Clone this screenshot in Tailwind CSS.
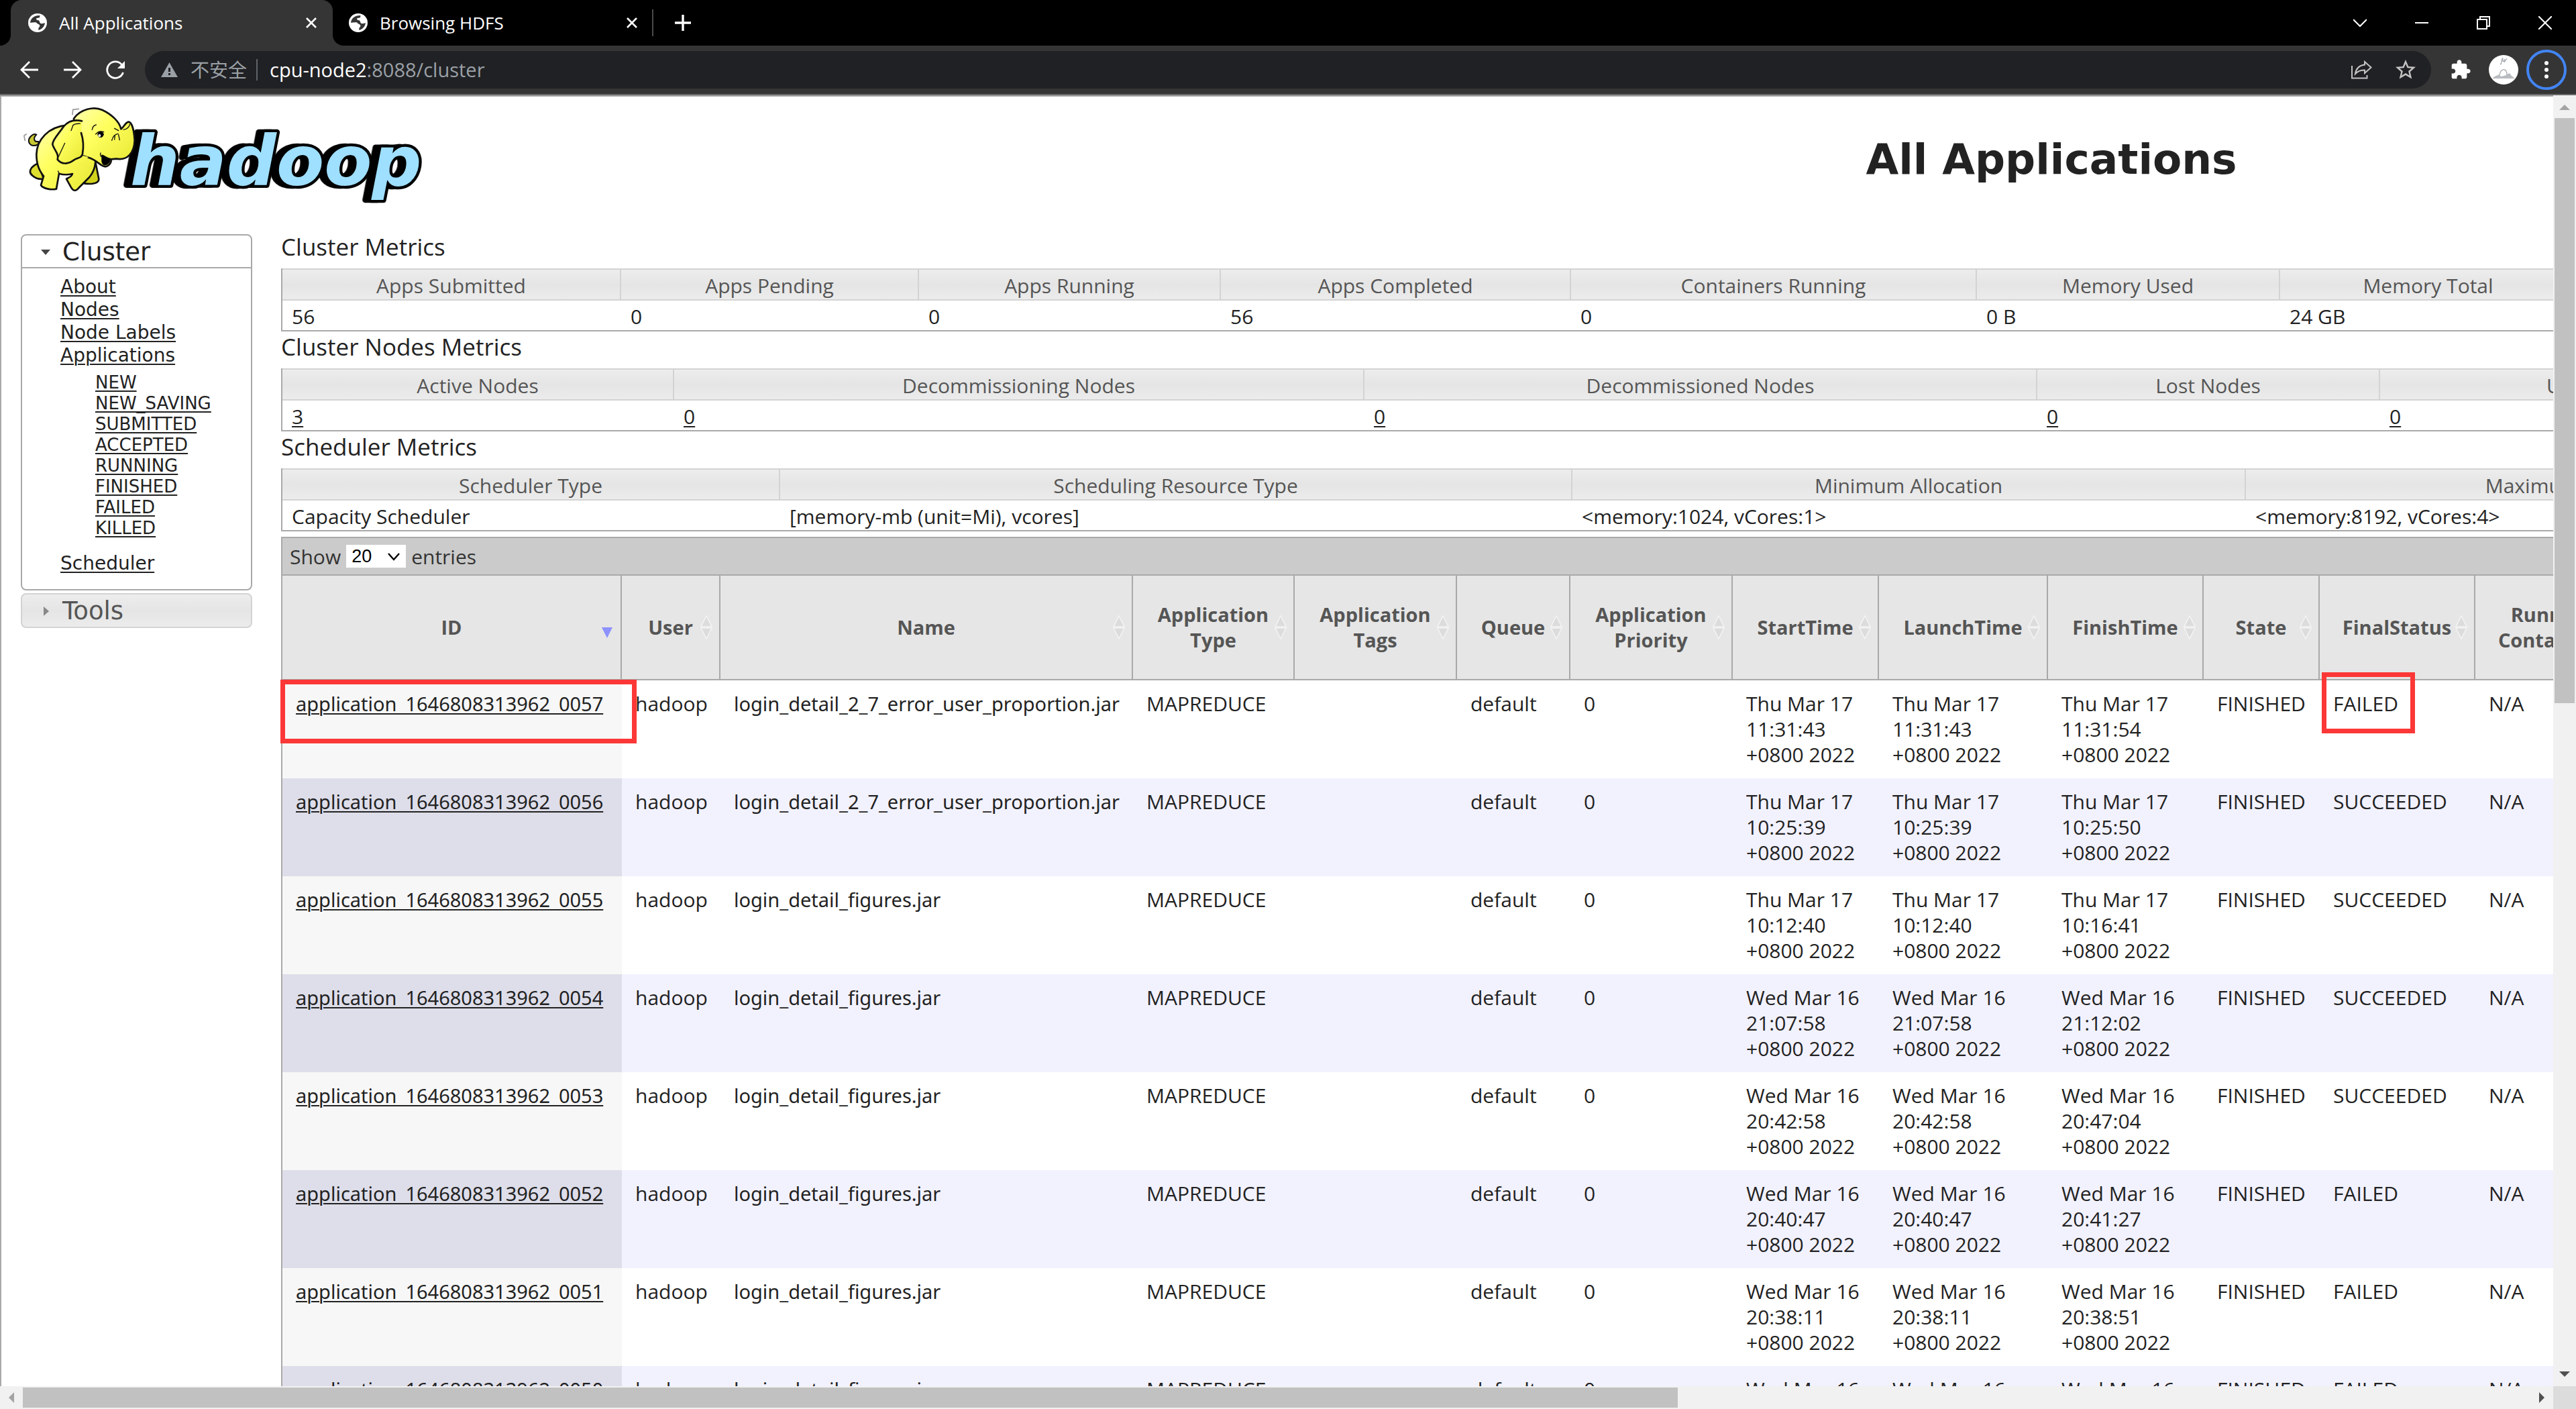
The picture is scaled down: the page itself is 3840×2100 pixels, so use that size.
<!DOCTYPE html>
<html lang="en">
<head>
<meta charset="utf-8">
<title>All Applications</title>
<script src="https://cdn.jsdelivr.net/npm/@tailwindcss/browser@4"></script>
</head>
<body class="flex h-screen flex-col overflow-hidden bg-white font-['Open_Sans','Noto_Sans_CJK_SC',sans-serif] text-[30px] text-[#222]">

<svg class="hidden" aria-hidden="true">
  <symbol id="globe" viewBox="0 0 84 84">
    <circle cx="42" cy="42" r="42" fill="#fff"/>
    <path fill="#353535" d="M52 9V14C52 20 46 20 38 21C34 26 38 30 46 31C52 33 50 42 56 45C64 47 70 43 75 43C73 58 62 71 46 75V65C54 59 54 51 46 48C38 46 39 42 34 40C24 40 16 42 9 41C11 22 28 8 52 9Z"/>
  </symbol>
  <symbol id="cross" viewBox="0 0 16 16"><path d="M1 1L15 15M15 1L1 15" fill="none" stroke="#fff" stroke-width="2.6"/></symbol>
  <symbol id="sort" viewBox="0 0 18 36"><path d="M9 1L17 17H1Z M9 35L17 19H1Z" fill="#dcdcdc" stroke="#f4f4f4" stroke-width="1.5"/></symbol>
</svg>

<!-- Tab strip -->
<div class="flex h-[68px] shrink-0 items-center bg-black text-[26px] text-white">
  <div class="h-full w-4 bg-[#353535]"><div class="h-full rounded-br-2xl bg-black"></div></div>
  <div class="flex h-full w-[480px] items-center rounded-t-2xl bg-[#353535] pr-6 pl-[26px]">
    <svg class="mr-[18px] size-7"><use href="#globe"/></svg>
    <span class="flex-1 whitespace-nowrap">All Applications</span>
    <button aria-label="Close tab" class="flex"><svg class="size-4"><use href="#cross"/></svg></button>
  </div>
  <div class="h-full w-4 bg-[#353535]"><div class="h-full rounded-bl-2xl bg-black"></div></div>
  <div class="flex h-full w-[438px] items-center pl-2">
    <svg class="mr-[18px] size-7"><use href="#globe"/></svg>
    <span class="flex-1 whitespace-nowrap">Browsing HDFS</span>
    <button aria-label="Close tab" class="flex"><svg class="size-4"><use href="#cross"/></svg></button>
  </div>
  <div class="ml-[22px] h-10 w-[2px] bg-[#4a4a4a]"></div>
  <button aria-label="New tab" class="ml-8 flex"><svg class="size-6" viewBox="0 0 24 24"><path d="M12 0V24M0 12H24" stroke="#fff" stroke-width="3.4"/></svg></button>
  <div class="ml-auto flex h-[58px] items-center gap-[72px] pr-9">
    <button aria-label="Search tabs" class="flex"><svg class="size-5" viewBox="0 0 20 20"><path d="M0 5L10 15L20 5" fill="none" stroke="#fff" stroke-width="2"/></svg></button>
    <button aria-label="Minimize" class="flex"><svg class="size-5" viewBox="0 0 20 20"><path d="M0 10H20" stroke="#fff" stroke-width="2"/></svg></button>
    <button aria-label="Restore" class="flex"><svg class="size-5" viewBox="0 0 20 20"><path d="M1 5H15V19H1ZM5 5V1H19V15H15" fill="none" stroke="#fff" stroke-width="2"/></svg></button>
    <button aria-label="Close" class="flex"><svg class="size-5" viewBox="0 0 20 20"><path d="M0 0L20 20M20 0L0 20" stroke="#fff" stroke-width="2"/></svg></button>
  </div>
</div>

<!-- Toolbar -->
<div class="flex h-[74px] shrink-0 items-center border-b-2 border-[#696969] bg-[#353535] pr-[14px] pl-[30px]">
  <button aria-label="Back" class="mr-9 flex"><svg class="size-7" viewBox="0 0 28 28"><path d="M27 14H3M14 2L2 14L14 26" fill="none" stroke="#fff" stroke-width="2.8"/></svg></button>
  <button aria-label="Forward" class="mr-9 flex"><svg class="size-7" viewBox="0 0 28 28"><path d="M1 14H25M14 2L26 14L14 26" fill="none" stroke="#fff" stroke-width="2.8"/></svg></button>
  <button aria-label="Reload" class="mr-[30px] flex"><svg class="size-7" viewBox="0 0 28 28"><path d="M25.500 18A12.200 12.200 0 1 1 23.500 6.500" fill="none" stroke="#fff" stroke-width="2.8"/><path d="M28 1V12H17Z" fill="#fff"/></svg></button>
  <div class="flex h-14 flex-1 items-center rounded-full bg-[#202124] pr-5 pl-6">
    <svg class="mr-[19px] h-[22px] w-[25px]" viewBox="0 0 25 22"><path d="M12.500 0L25 22H0Z" fill="#9aa0a6"/><path d="M11 8H14V14H11ZM11 16H14V19H11Z" fill="#202124"/></svg>
    <span class="text-[28px] text-[#9aa0a6]">不安全</span>
    <span class="mr-[18px] ml-[14px] h-8 w-[2px] bg-[#5f6368]"></span>
    <span class="flex-1 text-[29px] whitespace-nowrap text-[#9aa0a6]"><span class="text-white">cpu-node2</span>:8088/cluster</span>
    <button aria-label="Share" class="mr-8 flex"><svg class="h-7 w-8" viewBox="0 0 32 28"><path d="M2 8V26.500H24.500V22" fill="none" stroke="#c4c4c4" stroke-width="2"/><path d="M21 2L30.500 10.500L21 19V14.500C14 14.500 10 16.500 7 20C8 12 13 7.500 21 6.500Z" fill="none" stroke="#c4c4c4" stroke-width="2"/></svg></button>
    <button aria-label="Bookmark" class="flex"><svg class="size-9" viewBox="0 0 24 24"><path fill="#c4c4c4" d="M22 9.240l-7.190-.62L12 2 9.190 8.630 2 9.240l5.460 4.730L5.820 21 12 17.270 18.180 21l-1.630-7.030L22 9.240zM12 15.400l-3.760 2.270 1-4.280-3.320-2.880 4.380-.38L12 6.100l1.710 4.040 4.380.38-3.320 2.880 1 4.280L12 15.400z"/></svg></button>
  </div>
  <button aria-label="Extensions" class="ml-7 flex"><svg class="size-8" viewBox="0 0 24 24"><path fill="#fff" d="M20.500 11H19V7c0-1.100-.9-2-2-2h-4V3.500C13 2.120 11.880 1 10.500 1S8 2.120 8 3.500V5H4c-1.100 0-1.990.9-1.990 2v3.800H3.500c1.490 0 2.700 1.210 2.700 2.700s-1.210 2.700-2.700 2.700H2V20c0 1.100.9 2 2 2h3.800v-1.500c0-1.490 1.210-2.700 2.700-2.700 1.490 0 2.700 1.210 2.700 2.700V22H17c1.100 0 2-.9 2-2v-4h1.500c1.380 0 2.500-1.120 2.500-2.500S21.880 11 20.500 11z"/></svg></button>
  <button aria-label="Profile" class="mr-3 ml-[26px] flex"><svg class="size-11" viewBox="0 0 44 44"><circle cx="22" cy="22" r="22" fill="#fff"/><path d="M5 35C9 31 12 31 15 29L18 32L23 31L31 27L34 31L39 35Z" fill="#b9bcc0"/><path d="M16 30C18 19 27 19 27 29M17 13C19 17 19 4 21 5C20 12 23 10 24 6M23 11L27 5" fill="none" stroke="#9ea4aa" stroke-width="1.200"/></svg></button>
  <button aria-label="Menu" class="flex size-[60px] flex-col items-center justify-center gap-1 rounded-full border-4 border-[#4285f4]">
    <i class="size-[6px] rounded-full bg-white"></i><i class="size-[6px] rounded-full bg-white"></i><i class="size-[6px] rounded-full bg-white"></i>
  </button>
</div>

<!-- Viewport -->
<div class="flex min-h-0 flex-1">
  <div class="min-w-0 flex-1 overflow-hidden border-t-2 border-l-2 border-[#a9a9a9]">
    <div class="min-w-[5766px]">
      <header class="flex h-[201px] items-start">
        <a href="#" aria-label="hadoop" class="w-[346px] shrink-0 pt-[14px] pl-8">
          <svg class="h-[146px] w-[600px]" viewBox="102 474 1800 438">
            <defs>
              <linearGradient id="hide" x1="0" y1="0" x2="1" y2="1"><stop offset="0" stop-color="#ffffb0"/><stop offset=".4" stop-color="#ffff60"/><stop offset="1" stop-color="#e6e632"/></linearGradient>
            </defs>
            <g class="drop-shadow-[-26px_0_0_#000]">
              <text class="[paint-order:stroke]" x="582" y="828" font-family="DejaVu Sans" font-weight="bold" font-style="italic" font-size="311" fill="#9fdfff" stroke="#000" stroke-width="26" stroke-linejoin="round">hadoop</text>
            </g>
            <g stroke="#111" stroke-width="8" stroke-linejoin="round" stroke-linecap="round" fill="url(#hide)">
              <path d="M172 645C140 662 124 640 130 620C138 606 152 596 163 602C148 616 150 636 172 633Z" fill="#c8c830" stroke-width="6"/>
              <path d="M172 730C135 745 125 770 145 785C160 798 180 802 195 800Z" fill="#dede30"/>
              <path d="M428 730L442 800C442 824 400 824 376 820L396 770Z" fill="#d2d21e"/>
              <path d="M300 560C215 567 165 625 163 690C163 740 178 765 195 788L183 828C192 843 228 850 252 845L264 776C280 781 300 783 324 777C320 792 306 794 297 800L318 838C328 855 340 856 352 840L400 792C420 768 427 745 427 715L400 600Z"/>
              <path d="M330 530C360 488 420 474 458 492C500 512 535 545 541 577C556 568 560 545 577 545C592 550 600 590 602 628C600 685 570 718 520 710L497 712C499 735 477 750 462 743C442 734 430 716 400 706L350 690Z"/>
              <path d="M345 690L396 702L372 722L330 714Z" fill="#f6f64c" stroke="none"/>
              <path d="M455 694C462 690 472 706 494 709C492 728 480 737 466 738C450 728 458 712 455 694Z" fill="#000" stroke-width="4"/>
              <path d="M366 541C335 534 305 542 285 565C262 600 236 622 235 645C240 668 266 688 257 713C275 737 305 735 330 716C348 704 364 708 369 688C376 650 372 622 363 594"/>
              <path d="M326 560C336 552 345 552 358 553M326 562L318 584M290 640L262 700M412 580C414 566 420 560 430 558M428 600C436 590 448 584 464 590M450 684C448 690 448 698 455 702M500 628C504 612 512 600 528 598M514 604L512 624M530 602L535 626M512 574L530 584M552 580C566 580 578 568 580 556M264 776L260 765" fill="none" stroke-width="4"/>
              <ellipse cx="450" cy="601" rx="13" ry="13" fill="#000" stroke-width="2"/>
              <circle cx="445" cy="606" r="6" fill="#fff" stroke="none"/>
              <path d="M326 490L352 487M326 492L324 512M108 606L118 600M108 610L112 628" fill="none" stroke="#999" stroke-width="5"/>
            </g>
          </svg>
        </a>
        <h1 class="flex-1 pt-14 text-center font-['DejaVu_Sans',sans-serif] text-[63px] leading-[75px] font-bold">All Applications</h1>
      </header>

      <div class="flex items-start">
        <!-- Side navigation -->
        <nav class="mt-1 mr-[43px] ml-[29px] w-[345px] shrink-0 font-['DejaVu_Sans',sans-serif]">
          <div class="rounded-lg border-2 border-[#a9a9a9] pb-[21px]">
            <h3 class="flex h-[49px] items-center border-b-2 border-[#a9a9a9] pt-[2px] pl-7 text-[37px]">
              <svg class="mr-[18px] h-2 w-[14px]" viewBox="0 0 14 8"><path d="M0 0H14L7 8Z" fill="#454545"/></svg>Cluster
            </h3>
            <ul class="pt-[11px] pl-[57px] text-[28px] leading-[34px] [&_a]:underline [&_a]:decoration-2 [&_a]:underline-offset-[3px]">
              <li><a href="#">About</a></li>
              <li><a href="#">Nodes</a></li>
              <li><a href="#">Node Labels</a></li>
              <li><a href="#">Applications</a>
                <ul class="mt-2 mb-5 pl-[52px] text-[26px] leading-[31px]">
                  <li><a href="#">NEW</a></li>
                  <li><a href="#">NEW_SAVING</a></li>
                  <li><a href="#">SUBMITTED</a></li>
                  <li><a href="#">ACCEPTED</a></li>
                  <li><a href="#">RUNNING</a></li>
                  <li><a href="#">FINISHED</a></li>
                  <li><a href="#">FAILED</a></li>
                  <li><a href="#">KILLED</a></li>
                </ul>
              </li>
              <li><a href="#">Scheduler</a></li>
            </ul>
          </div>
          <h3 class="mt-1 flex h-[52px] items-center rounded-lg border-2 border-[#d3d3d3] bg-linear-to-b from-[#ededed] via-[#e5e5e5] to-[#ececec] pt-[2px] pl-8 text-[37px] text-[#555]">
            <svg class="mr-5 h-[14px] w-2" viewBox="0 0 8 14"><path d="M0 0V14L8 7Z" fill="#888"/></svg>Tools
          </h3>
        </nav>

        <main class="min-w-0 flex-1">
          <div id="metrics"></div>

          <!-- Applications table -->
          <section class="mt-2 border-t-2 border-l-2 border-[#a9a9a9]">
            <div class="flex h-14 items-center gap-2 border-b-2 border-[#a9a9a9] bg-[#cbcbcb] pl-[11px] text-[#333]">
              <label for="length">Show</label>
              <span class="relative flex">
                <select id="length" class="h-[34px] w-[89px] appearance-none bg-white pl-2 font-['Liberation_Sans',sans-serif] text-[27px] leading-[34px] text-black"><option>20</option><option>50</option><option>100</option></select>
                <svg class="pointer-events-none absolute top-3 right-[9px] h-3 w-[18px]" viewBox="0 0 18 12"><path d="M1 1L9 10L17 1" fill="none" stroke="#000" stroke-width="2.4"/></svg>
              </span>
              <span>entries</span>
            </div>
            <table class="w-full table-fixed border-separate border-spacing-0 text-left leading-[38px]">
              <colgroup id="cols"></colgroup>
              <thead><tr id="head"></tr></thead>
              <tbody id="rows"></tbody>
            </table>
          </section>
        </main>
      </div>
    </div>
  </div>

  <!-- Vertical scroll bar -->
  <div class="flex w-[34px] shrink-0 flex-col bg-[#f1f1f1]">
    <svg class="size-[34px] shrink-0" viewBox="0 0 34 34"><path d="M9 22H25L17 14Z" fill="#a3a3a3"/></svg>
    <div class="min-h-0 flex-1 px-[2px]"><div class="h-[47%] bg-[#c1c1c1]"></div></div>
    <svg class="size-[34px] shrink-0" viewBox="0 0 34 34"><path d="M9 12H25L17 20Z" fill="#505050"/></svg>
  </div>
</div>

<!-- Horizontal scroll bar -->
<div class="flex h-[34px] shrink-0 bg-[#f1f1f1]">
  <svg class="size-[34px] shrink-0" viewBox="0 0 34 34"><path d="M21 9V25L13 17Z" fill="#a3a3a3"/></svg>
  <div class="flex-1 py-[2px]"><div class="h-full w-[66%] bg-[#c1c1c1]"></div></div>
  <svg class="size-[34px] shrink-0" viewBox="0 0 34 34"><path d="M13 9V25L21 17Z" fill="#505050"/></svg>
  <div class="w-[34px] bg-[#dcdcdc]"></div>
</div>

<script>
const esc = s => s.replace(/</g, '&lt;').replace(/>/g, '&gt;');

// Summary tables: title, whether values are links, [heading, value, column width]
const metrics = [
  ['Cluster Metrics', false, [['Apps Submitted', '56', 505], ['Apps Pending', '0', 444], ['Apps Running', '0', 450], ['Apps Completed', '56', 522], ['Containers Running', '0', 605], ['Memory Used', '0 B', 452], ['Memory Total', '24 GB', 443], ['Memory Reserved', '0 B', 0]]],
  ['Cluster Nodes Metrics', true, [['Active Nodes', '3', 584], ['Decommissioning Nodes', '0', 1029], ['Decommissioned Nodes', '0', 1003], ['Lost Nodes', '0', 511], ['Unhealthy Nodes', '0', 740], ['Rebooted Nodes', '0', 0]]],
  ['Scheduler Metrics', false, [['Scheduler Type', 'Capacity Scheduler', 742], ['Scheduling Resource Type', '[memory-mb (unit=Mi), vcores]', 1181], ['Minimum Allocation', '<memory:1024, vCores:1>', 1004], ['Maximum Allocation', '<memory:8192, vCores:4>', 1002], ['Maximum Cluster Application Priority', '0', 0]]],
];
document.getElementById('metrics').innerHTML = metrics.map(([title, linked, cols]) => `
  <h3 class="pb-[10px] text-[35px] leading-[45px]">${title}</h3>
  <table class="w-full table-fixed border-separate border-spacing-0 border-b-2 border-l-2 border-[#a9a9a9] text-left leading-[40px]">
    <colgroup>${cols.map(c => c[2] ? `<col style="width:${c[2]}px">` : '<col>').join('')}</colgroup>
    <thead><tr>${cols.map(c => `<th class="border-t-2 border-r-2 border-b-2 border-[#d3d3d3] bg-linear-to-b from-[#ededed] via-[#e5e5e5] to-[#ececec] p-0 pt-1 text-center font-normal whitespace-nowrap text-[#555]">${c[0]}</th>`).join('')}</tr></thead>
    <tbody><tr>${cols.map(c => `<td class="p-0 pt-1 pl-[14px] whitespace-nowrap">${linked ? `<a href="#" class="underline decoration-2 underline-offset-[3px]">${c[1]}</a>` : esc(c[1])}</td>`).join('')}</tr></tbody>
  </table>`).join('');

const columns = [['ID', 506], ['User', 147], ['Name', 615], ['Application Type', 241], ['Application Tags', 242], ['Queue', 169], ['Application Priority', 242], ['StartTime', 218], ['LaunchTime', 252], ['FinishTime', 232], ['State', 173], ['FinalStatus', 232], ['Running Containers', 228], ['Allocated CPU VCores', 0]];
document.getElementById('cols').innerHTML = columns.map(c => c[1] ? `<col style="width:${c[1]}px">` : '<col>').join('');
document.getElementById('head').innerHTML = columns.map(([name], i) => `
  <th class="relative h-[156px] border-r-2 border-b-2 border-[#a9a9a9] bg-[#e6e6e6] px-7 text-center text-[29px] text-[#555]">${name}
    ${i ? '<svg class="absolute top-[59px] right-[10px] h-9 w-[18px]"><use href="#sort"/></svg>'
        : '<svg class="absolute top-[77px] right-3 h-4 w-4" viewBox="0 0 16 16"><path d="M0 0H16L8 16Z" fill="#8d92ff"/></svg>'}
  </th>`).join('');

const apps = [
  ['0057', 'login_detail_2_7_error_user_proportion.jar', 'Thu Mar 17', '11:31:43', '11:31:43', '11:31:54', 'FAILED'],
  ['0056', 'login_detail_2_7_error_user_proportion.jar', 'Thu Mar 17', '10:25:39', '10:25:39', '10:25:50', 'SUCCEEDED'],
  ['0055', 'login_detail_figures.jar', 'Thu Mar 17', '10:12:40', '10:12:40', '10:16:41', 'SUCCEEDED'],
  ['0054', 'login_detail_figures.jar', 'Wed Mar 16', '21:07:58', '21:07:58', '21:12:02', 'SUCCEEDED'],
  ['0053', 'login_detail_figures.jar', 'Wed Mar 16', '20:42:58', '20:42:58', '20:47:04', 'SUCCEEDED'],
  ['0052', 'login_detail_figures.jar', 'Wed Mar 16', '20:40:47', '20:40:47', '20:41:27', 'FAILED'],
  ['0051', 'login_detail_figures.jar', 'Wed Mar 16', '20:38:11', '20:38:11', '20:38:51', 'FAILED'],
  ['0050', 'login_detail_figures.jar', 'Wed Mar 16', '20:35:02', '20:35:02', '20:35:42', 'FAILED'],
];
document.getElementById('rows').innerHTML = apps.map(([id, name, day, start, launch, finish, status], i) => {
  const time = t => `${day}<br>${t}<br>+0800 2022`;
  const mark = i === 0;
  const cells = [time(start), time(launch), time(finish), 'FINISHED',
    status + (mark ? '<span class="absolute -top-3 left-[3px] h-[91px] w-[139px] border-[7px] border-[#fc3737]"></span>' : ''), 'N/A', 'N/A'];
  const cell = c => `<td class="relative py-4 pl-5 align-top whitespace-nowrap">${c}</td>`;
  return `<tr class="${i % 2 ? 'bg-[#f2f2ff]' : 'bg-white'}">
    <td class="relative py-4 pl-5 align-top font-['Noto_Sans',sans-serif] text-[29px] whitespace-nowrap ${i % 2 ? 'bg-[#dedeea]' : 'bg-[#f7f7f7]'}"><a href="#" class="underline decoration-2 underline-offset-[3px]">application_1646808313962_${id}</a>${mark ? '<span class="absolute -top-px -left-[3px] z-10 h-[95px] w-[531px] border-[7px] border-[#fc3737]"></span>' : ''}</td>
    ${cell('hadoop')}
    <td class="py-4 pl-5 align-top font-['Noto_Sans',sans-serif] text-[29px] whitespace-nowrap">${name}</td>
    ${['MAPREDUCE', '', 'default', '0', ...cells].map(cell).join('')}
  </tr>`;
}).join('');
</script>
</body>
</html>
